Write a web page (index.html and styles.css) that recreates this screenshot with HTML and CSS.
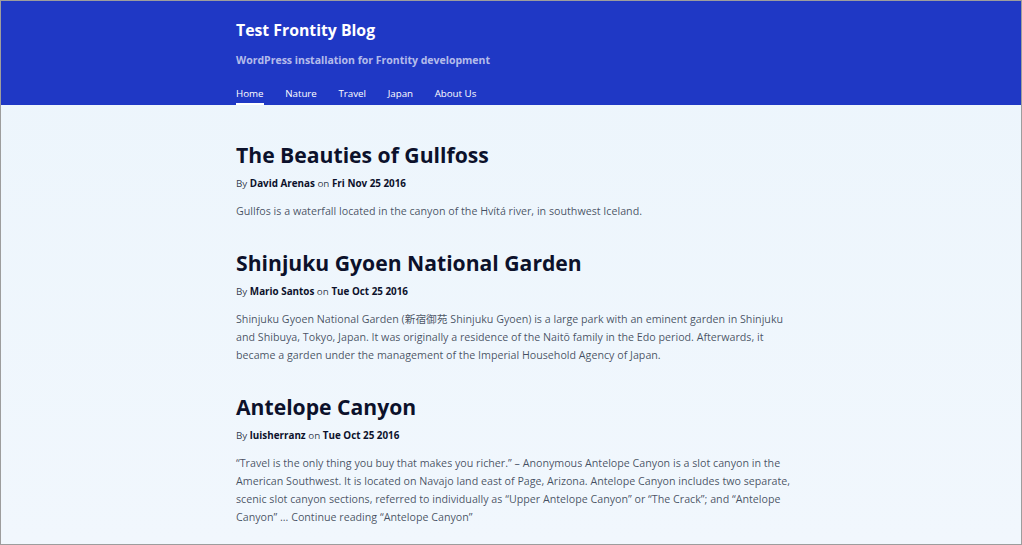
FILE: index.html
```html
<!DOCTYPE html>
<html lang="en">
<head>
<meta charset="utf-8">
<title>Test Frontity Blog</title>
<link rel="stylesheet" href="styles.css">
</head>
<body>
<div class="frame">
  <header class="site-header">
    <div class="container">
      <h1 class="site-title">Test Frontity Blog</h1>
      <p class="site-desc">WordPress installation for Frontity development</p>
      <nav class="nav">
        <a class="nav-item active" href="#">Home</a>
        <a class="nav-item" href="#">Nature</a>
        <a class="nav-item" href="#">Travel</a>
        <a class="nav-item" href="#">Japan</a>
        <a class="nav-item" href="#">About Us</a>
      </nav>
    </div>
  </header>
  <main class="main">
    <div class="container list">
      <article class="post">
        <h2 class="post-title">The Beauties of Gullfoss</h2>
        <p class="byline">By <b>David Arenas</b> on <b>Fri Nov 25 2016</b></p>
        <p class="excerpt">Gullfos is a waterfall located in the canyon of the Hvítá river, in southwest Iceland.</p>
      </article>
      <article class="post">
        <h2 class="post-title">Shinjuku Gyoen National Garden</h2>
        <p class="byline">By <b>Mario Santos</b> on <b>Tue Oct 25 2016</b></p>
        <p class="excerpt">Shinjuku Gyoen National Garden (新宿御苑 Shinjuku Gyoen) is a large park with an eminent garden in Shinjuku and Shibuya, Tokyo, Japan. It was originally a residence of the Naitō family in the Edo period. Afterwards, it became a garden under the management of the Imperial Household Agency of Japan.</p>
      </article>
      <article class="post">
        <h2 class="post-title">Antelope Canyon</h2>
        <p class="byline">By <b>luisherranz</b> on <b>Tue Oct 25 2016</b></p>
        <p class="excerpt">“Travel is the only thing you buy that makes you richer.” – Anonymous Antelope Canyon is a slot canyon in the American Southwest. It is located on Navajo land east of Page, Arizona. Antelope Canyon includes two separate, scenic slot canyon sections, referred to individually as “Upper Antelope Canyon” or “The Crack”; and “Antelope Canyon” … Continue reading “Antelope Canyon”</p>
      </article>
    </div>
  </main>
</div>
</body>
</html>
```
FILE: styles.css
```css
html, body {
  margin: 0;
  padding: 0;
}
body {
  font-family: "Open Sans", "Noto Sans CJK JP", sans-serif;
  background: #fff;
}
.frame {
  box-sizing: border-box;
  width: 1022px;
  height: 545px;
  border: 1px solid #9d9d9d;
  overflow: hidden;
  background: linear-gradient(to bottom, #ecf5fc 0%, #f1f7fd 100%);
}
.container {
  width: 550px;
  margin: 0 auto;
}
.site-header {
  background: #1f38c5;
  color: #fff;
}
.site-header .container {
  display: flex;
  flex-direction: column;
  padding-top: 18px;
}
.site-title {
  margin: 0;
  font-size: 15.8px;
  line-height: 22px;
  font-weight: 700;
}
.site-desc {
  margin: 12px 0 0;
  font-size: 10.5px;
  line-height: 14px;
  font-weight: 700;
  color: rgba(255, 255, 255, 0.68);
}
.nav {
  display: flex;
  gap: 21.6px;
  margin-top: 20px;
}
.nav-item {
  color: #fff;
  text-decoration: none;
  font-size: 9.75px;
  line-height: 14px;
  padding-bottom: 2px;
  border-bottom: 2px solid transparent;
}
.nav-item.active {
  border-bottom-color: #fff;
}
.list {
  padding-top: 36px;
}
.post {
  margin-bottom: 29px;
}
.post-title {
  margin: 0;
  font-size: 21.15px;
  line-height: 28px;
  font-weight: 700;
  color: #0c112b;
}
.byline {
  margin: 7px 0 0;
  font-size: 9.85px;
  line-height: 14px;
  color: rgba(12, 17, 43, 0.85);
}
.byline b {
  color: #0c112b;
}
.excerpt {
  margin: 12px -12px 0 0;
  font-size: 10.7px;
  line-height: 18px;
  color: rgba(20, 30, 55, 0.78);
}
```
